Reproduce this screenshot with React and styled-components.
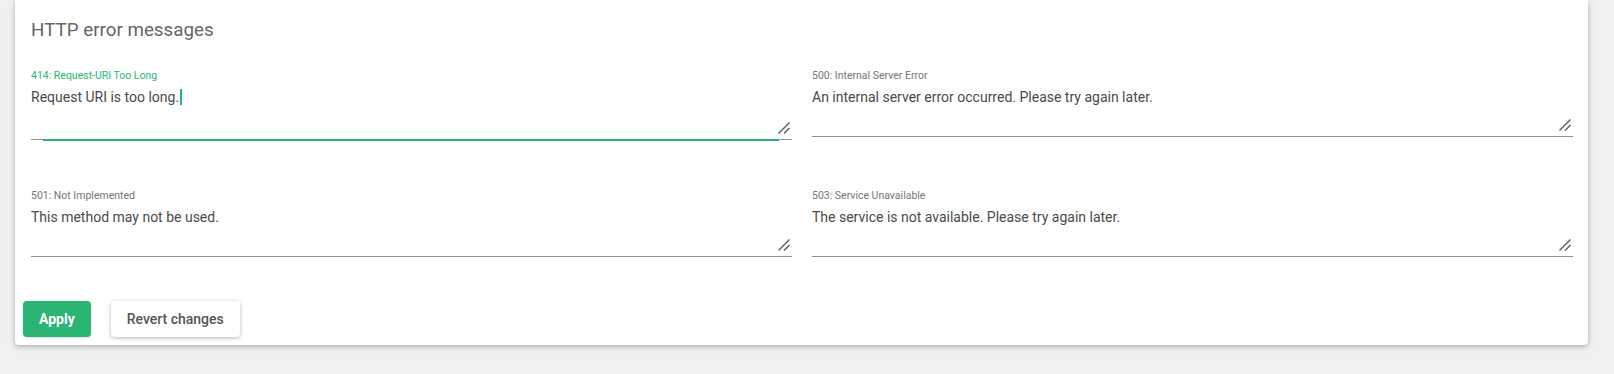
import React from 'react'
import styled, { createGlobalStyle } from 'styled-components'

const GlobalStyle = createGlobalStyle`
  body {
    margin: 0;
    background: #f1f1f1;
    font-family: Roboto, "Liberation Sans", sans-serif;
  }
`

const green = '#2bb574'

const fields = [
  { code: '414: Request-URI Too Long', value: 'Request URI is too long.', focused: true },
  { code: '500: Internal Server Error', value: 'An internal server error occurred. Please try again later.' },
  { code: '501: Not Implemented', value: 'This method may not be used.' },
  { code: '503: Service Unavailable', value: 'The service is not available. Please try again later.' },
]

const ResizeHandle = () => (
  <Handle width='12' height='12' viewBox='0 0 12 12'>
    <line x1='0.5' y1='11.5' x2='11.5' y2='0.5' />
    <line x1='6' y1='11.5' x2='11.5' y2='6' />
  </Handle>
)

const App = () => {
  return (
    <Page>
      <GlobalStyle />
      <Card>
        <CardBody>
          <Title>HTTP error messages</Title>
          <FieldGrid>
            {fields.map(f => (
              <Field key={f.code}>
                <Label focused={f.focused}>{f.code}</Label>
                <InputWrap focused={f.focused}>
                  <TextArea rows={2} defaultValue={f.value} focused={f.focused} />
                  {f.focused && (
                    <Mirror aria-hidden='true'>
                      {f.value}<Caret />
                    </Mirror>
                  )}
                  <ResizeHandle />
                </InputWrap>
              </Field>
            ))}
          </FieldGrid>
        </CardBody>
        <Actions>
          <Button primary>Apply</Button>
          <Button>Revert changes</Button>
        </Actions>
      </Card>
    </Page>
  )
}

const Page = styled.div`
  padding: 0 26px 28px 15px;
`

const Card = styled.div`
  background: #fff;
  border-radius: 0 0 4px 4px;
  box-shadow: 0 2px 5px rgba(0, 0, 0, 0.22), 0 1px 10px rgba(0, 0, 0, 0.08);
`

const CardBody = styled.div`
  padding: 17px 15px 36px 16px;
`

const Title = styled.h2`
  margin: 0 0 25px;
  font-size: 18.8px;
  line-height: 26px;
  font-weight: 400;
  color: #666;
`

const FieldGrid = styled.div`
  display: grid;
  grid-template-columns: 1fr 1fr;
  column-gap: 20px;
  row-gap: 48px;
`

const Field = styled.div`
  display: flex;
  flex-direction: column;
`

const Label = styled.label`
  font-size: 10.5px;
  line-height: 16px;
  color: ${p => (p.focused ? green : '#757575')};
`

const InputWrap = styled.div`
  position: relative;

  &::after {
    content: '';
    display: ${p => (p.focused ? 'block' : 'none')};
    position: absolute;
    left: 12px;
    right: 13px;
    bottom: -1px;
    height: 2px;
    background: ${green};
  }
`

const TextArea = styled.textarea`
  display: block;
  width: 100%;
  box-sizing: border-box;
  margin: 0;
  padding: 1px 0 ${p => (p.focused ? '6px' : '3px')};
  border: none;
  border-bottom: 1px solid #8f8f8f;
  outline: none;
  background: transparent;
  resize: none;
  font-family: Roboto, "Liberation Sans", sans-serif;
  font-size: 14px;
  line-height: 24px;
  color: #4a4a4a;
  caret-color: ${green};
`

const Handle = styled.svg`
  position: absolute;
  right: 2px;
  bottom: 6px;
  stroke: #5c5c5c;
  stroke-width: 1.4;
  pointer-events: none;
`

const Mirror = styled.div`
  position: absolute;
  left: 0;
  top: 1px;
  font-size: 14px;
  line-height: 24px;
  color: transparent;
  pointer-events: none;
  white-space: pre;
`

const Caret = styled.span`
  display: inline-block;
  width: 2px;
  height: 16px;
  margin-left: 1px;
  vertical-align: -3px;
  background: ${green};
`

const Actions = styled.div`
  display: flex;
  gap: 20px;
  padding: 8px;
`

const Button = styled.button`
  height: 36px;
  padding: 0 16px;
  border: none;
  border-radius: 4px;
  font-family: Roboto, "Liberation Sans", sans-serif;
  font-size: 14px;
  font-weight: ${p => (p.primary ? 700 : 500)};
  color: ${p => (p.primary ? '#fff' : '#555')};
  background: ${p => (p.primary ? green : '#fff')};
  box-shadow: ${p => (p.primary ? '0 1px 2px rgba(0,0,0,0.12)' : '0 1px 4px rgba(0,0,0,0.28)')};
  cursor: pointer;
`

export default App
